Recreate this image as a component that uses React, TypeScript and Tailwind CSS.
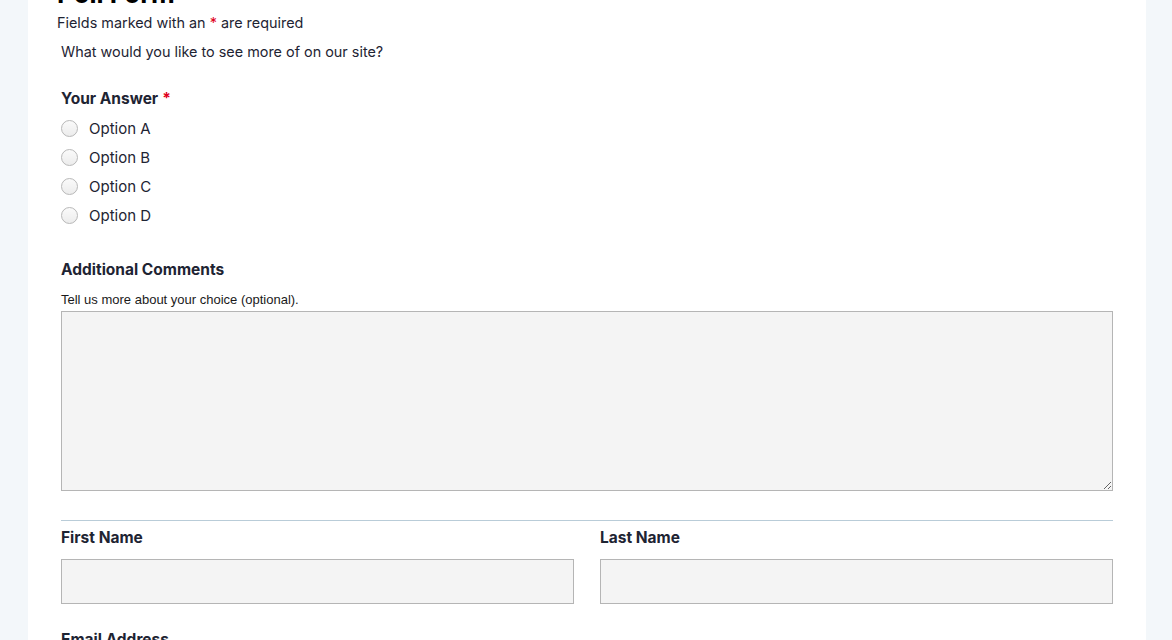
const options = ["Option A", "Option B", "Option C", "Option D"];

const Req = () => <span className="text-[#e0001b] ml-1">*</span>;

export default function App() {
  return (
    <div className="h-[640px] overflow-hidden bg-[#f3f7fa] font-['Inter','Liberation_Sans',sans-serif] text-[#1e2433]">
      <div className="ml-[28px] w-[1118px] h-full bg-white px-[33px] flex flex-col">
        <div className="-mt-[24px]">
          {/* Header */}
          <h1 className="-ml-[4px] text-[26px] leading-[36px] font-bold text-black">Poll Form</h1>
          <p className="-ml-[4px] text-[14.4px] leading-[22px]">
            Fields marked with an <span className="text-[#e0001b]">*</span> are required
          </p>
          <p className="mt-[7px] text-[14.4px] leading-[22px]">What would you like to see more of on our site?</p>

          {/* Radio question */}
          <div className="mt-[25px] text-[15.5px] leading-[22px] font-bold">
            Your Answer<Req />
          </div>
          <div className="mt-[4px] flex flex-col">
            {options.map((o) => (
              <label key={o} className="flex items-center h-[29px] gap-[11px] text-[15px]">
                <span className="w-[17px] h-[17px] rounded-full border border-[#b8b8b8] bg-gradient-to-b from-[#fafafa] to-[#ececec]" />
                <span className="leading-[22px]">{o}</span>
              </label>
            ))}
          </div>

          {/* Comments */}
          <div className="mt-[29px] text-[15.5px] leading-[22px] font-bold">Additional Comments</div>
          <p className="mt-[11px] text-[13px] leading-[16px] font-['Liberation_Sans','Inter',sans-serif] text-[#1a1a1a]">
            Tell us more about your choice (optional).
          </p>
          <textarea className="mt-[3px] block w-full h-[180px] bg-[#f4f4f4] border border-[#b5b5b5] outline-none" />

          <div className="mt-[29px] border-t border-[#b9ccd8]" />

          {/* Name fields */}
          <div className="mt-[6px] grid grid-cols-2 gap-[26px]">
            {["First Name", "Last Name"].map((l) => (
              <div key={l}>
                <div className="text-[15.5px] leading-[22px] font-bold">{l}</div>
                <input className="mt-[10px] block w-full h-[45px] bg-[#f4f4f4] border border-[#b5b5b5] outline-none" />
              </div>
            ))}
          </div>

          <div className="mt-[25px] text-[15.5px] leading-[22px] font-bold">Email Address</div>
        </div>
      </div>
    </div>
  );
}
